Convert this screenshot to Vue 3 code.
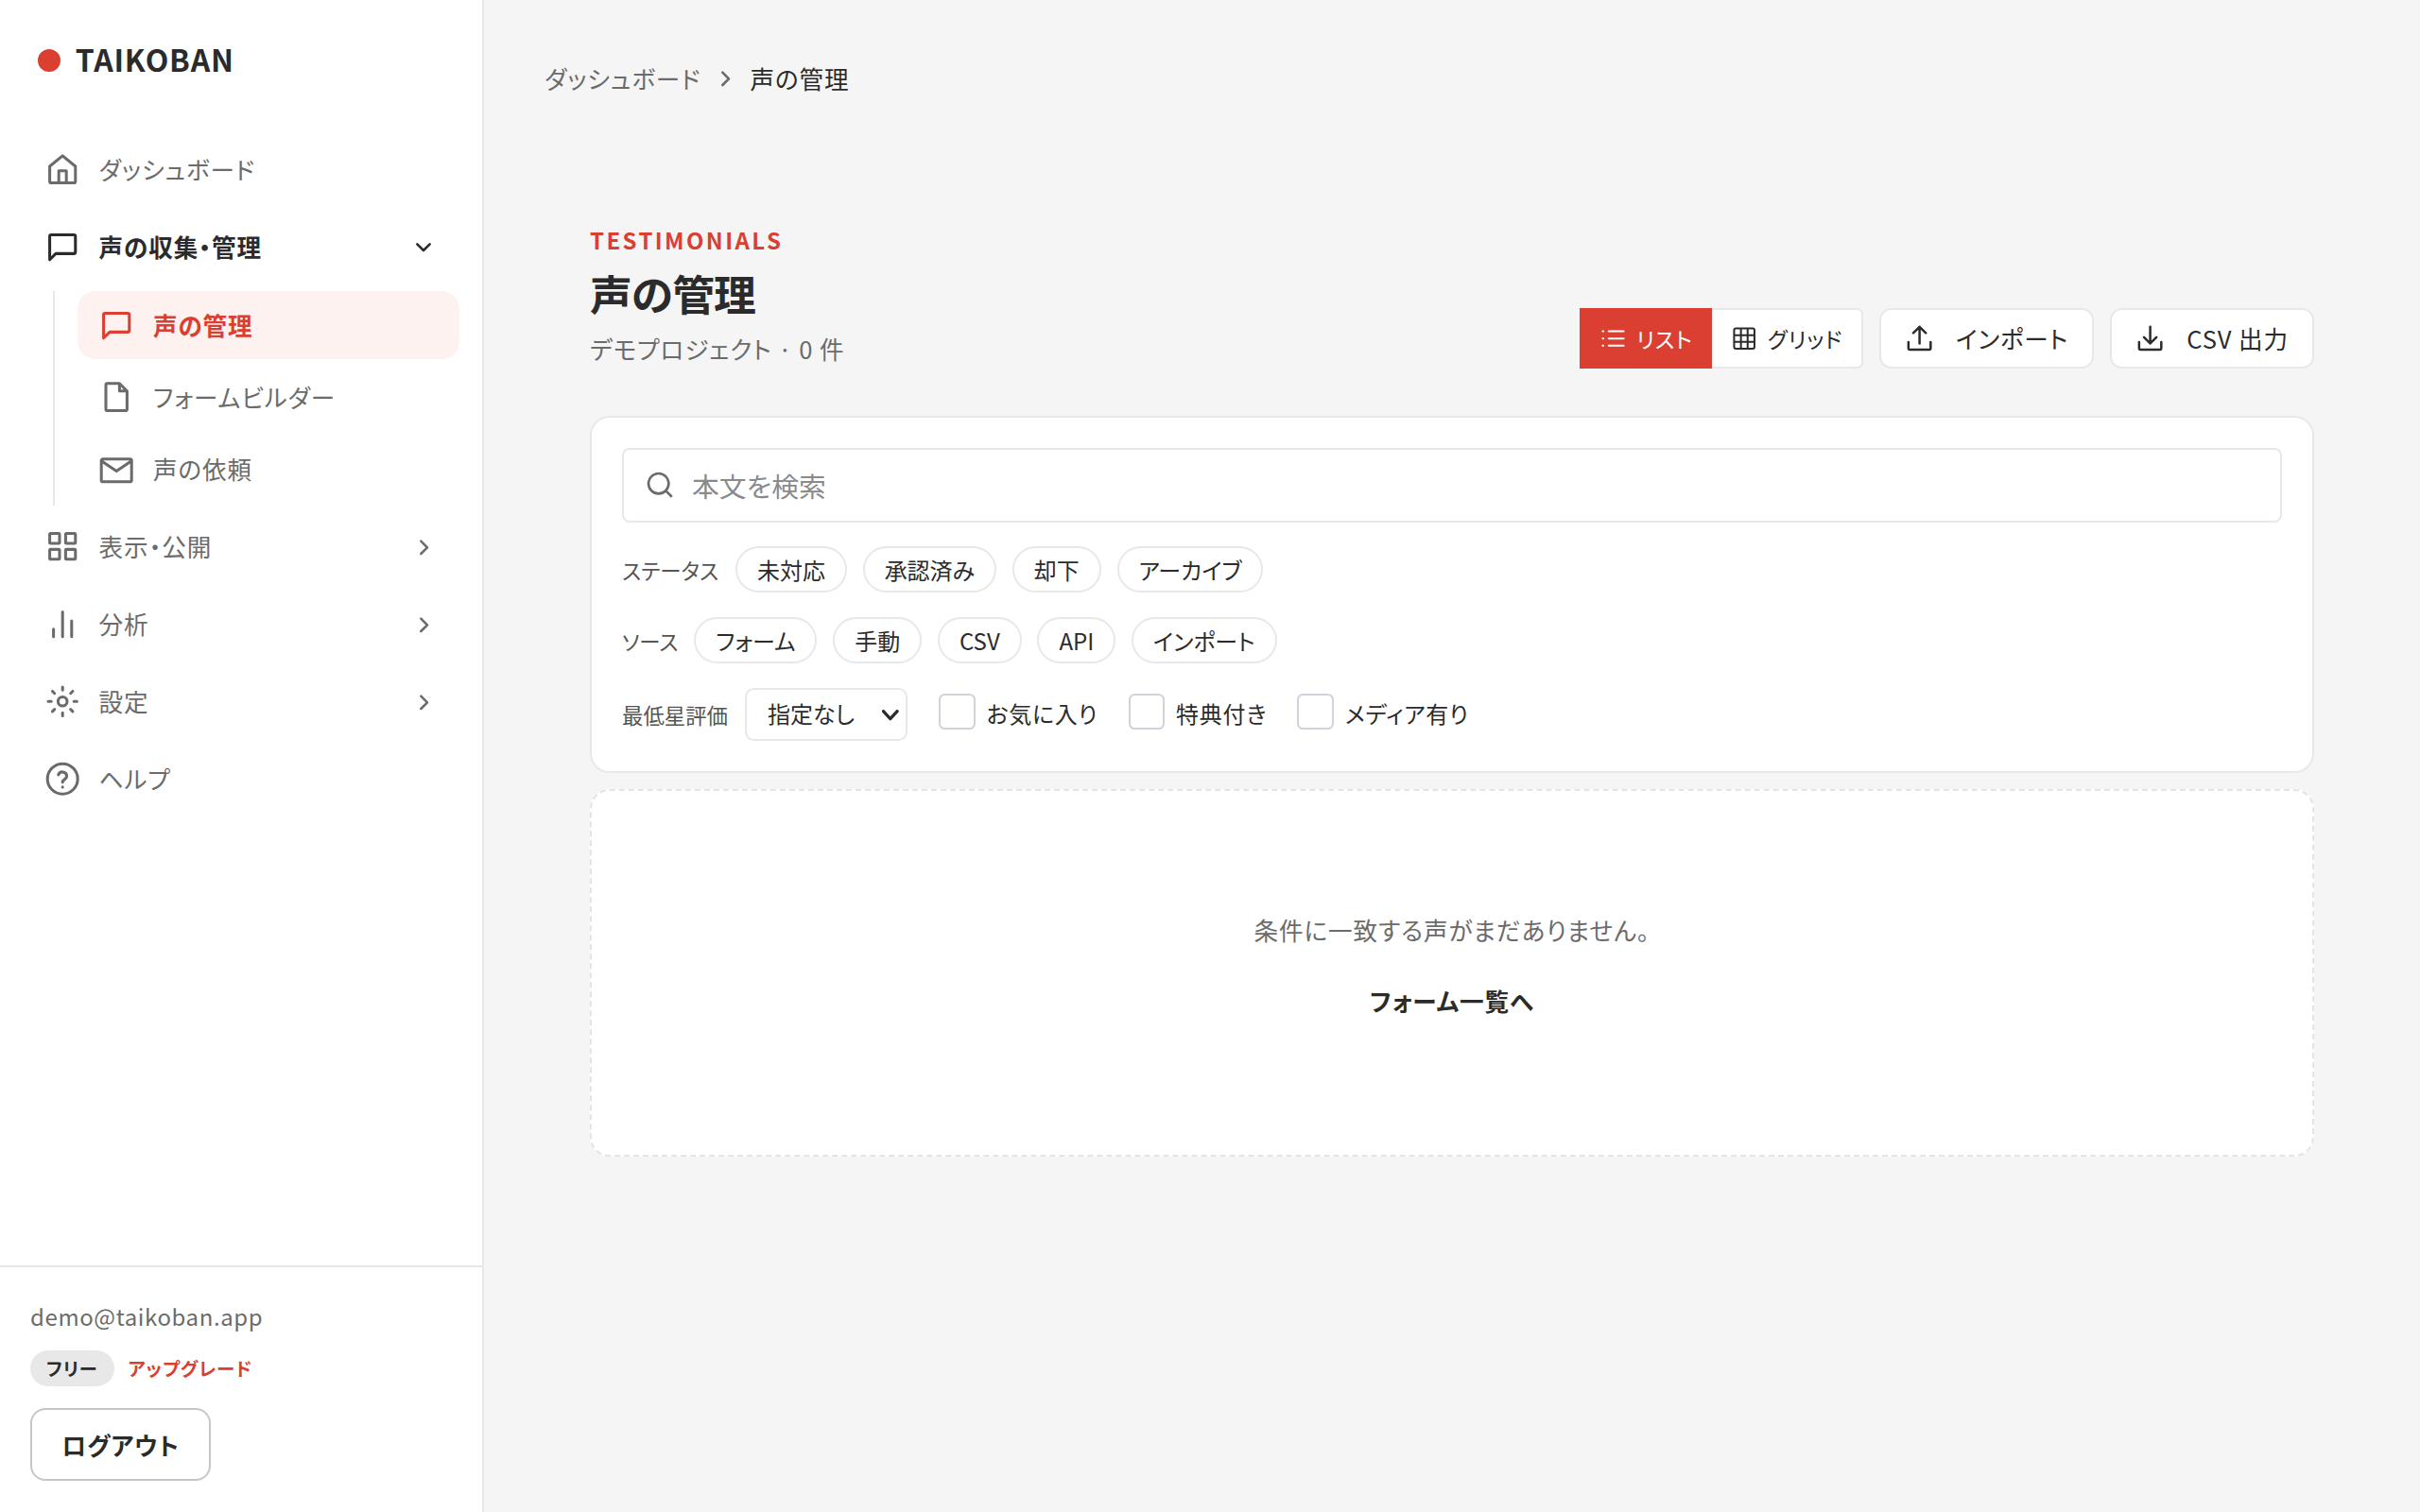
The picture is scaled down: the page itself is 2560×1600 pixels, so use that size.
<script setup>
const icons = {
  home: 'M3.5 10 12 3l8.5 7v10a1 1 0 0 1-1 1h-15a1 1 0 0 1-1-1V10ZM9.5 21v-8h5v8',
  chat: 'M3.5 20.5V5a1 1 0 0 1 1-1h15a1 1 0 0 1 1 1v10.5a1 1 0 0 1-1 1H7.5l-4 4Z',
  file: 'M6 3h8l5 5v12a1 1 0 0 1-1 1H6a1 1 0 0 1-1-1V4a1 1 0 0 1 1-1ZM14 3v5h5',
  mail: 'M3 5.5h18a1 1 0 0 1 1 1v13a1 1 0 0 1-1 1H3a1 1 0 0 1-1-1v-13a1 1 0 0 1 1-1ZM2.5 7 12 13.5 21.5 7',
  grid: 'M4 3.5h5.5a.5.5 0 0 1 .5.5v5.5a.5.5 0 0 1-.5.5H4a.5.5 0 0 1-.5-.5V4a.5.5 0 0 1 .5-.5ZM14.5 3.5H20a.5.5 0 0 1 .5.5v5.5a.5.5 0 0 1-.5.5h-5.5a.5.5 0 0 1-.5-.5V4a.5.5 0 0 1 .5-.5ZM4 14h5.5a.5.5 0 0 1 .5.5V20a.5.5 0 0 1-.5.5H4a.5.5 0 0 1-.5-.5v-5.5A.5.5 0 0 1 4 14ZM14.5 14H20a.5.5 0 0 1 .5.5V20a.5.5 0 0 1-.5.5h-5.5a.5.5 0 0 1-.5-.5v-5.5a.5.5 0 0 1 .5-.5Z',
  bars: 'M6 20.5v-5M12 20.5V4M18 20.5V10',
  sun: 'M12 15a3 3 0 1 0 0-6 3 3 0 0 0 0 6ZM12 2.5v2M12 19.5v2M5.3 5.3l1.4 1.4M17.3 17.3l1.4 1.4M2.5 12h2M19.5 12h2M5.3 18.7l1.4-1.4M17.3 6.7l1.4-1.4',
  help: 'M12 22a10 10 0 1 0 0-20 10 10 0 0 0 0 20ZM9.2 9.3a2.9 2.9 0 0 1 5.6.9c0 1.9-2.8 2.4-2.8 4M12 17.4v.1',
  down: 'm7 10 5 5 5-5',
  right: 'm10 8 5 5-5 5',
  list: 'M8.5 6H21M8.5 12H21M8.5 18H21M3.5 6h.5M3.5 12h.5M3.5 18h.5',
  table: 'M5 3.5h14a1.5 1.5 0 0 1 1.5 1.5v14a1.5 1.5 0 0 1-1.5 1.5H5A1.5 1.5 0 0 1 3.5 19V5A1.5 1.5 0 0 1 5 3.5ZM3.5 9.2h17M3.5 14.8h17M9.2 3.5v17M14.8 3.5v17',
  upload: 'M4 15v4.5a1 1 0 0 0 1 1h14a1 1 0 0 0 1-1V15M12 16V4M7.5 8.5 12 4l4.5 4.5',
  download: 'M4 15v4.5a1 1 0 0 0 1 1h14a1 1 0 0 0 1-1V15M12 4v12M7.5 11.5 12 16l4.5-4.5',
  search: 'M11 19a8 8 0 1 0 0-16 8 8 0 0 0 0 16ZM16.8 16.8 21 21',
}

const subItems = [
  { label: '声の管理', icon: 'chat', active: true },
  { label: 'フォームビルダー', icon: 'file' },
  { label: '声の依頼', icon: 'mail' },
]
const lowerItems = [
  { label: '表示・公開', icon: 'grid', arrow: true },
  { label: '分析', icon: 'bars', arrow: true },
  { label: '設定', icon: 'sun', arrow: true },
  { label: 'ヘルプ', icon: 'help' },
]
const statuses = ['未対応', '承認済み', '却下', 'アーカイブ']
const sources = ['フォーム', '手動', 'CSV', 'API', 'インポート']
const toggles = ['お気に入り', '特典付き', 'メディア有り']
</script>

<template>
  <div class="app">
    <aside class="sidebar">
      <div class="logo">
        <span class="logo-dot"></span>
        <span class="logo-text">TAIKOBAN</span>
      </div>

      <nav class="nav">
        <a class="nav-item">
          <svg class="icon" viewBox="0 0 24 24"><path :d="icons.home" /></svg>
          <span>ダッシュボード</span>
        </a>
        <a class="nav-item open">
          <svg class="icon" viewBox="0 0 24 24"><path :d="icons.chat" /></svg>
          <span>声の収集・管理</span>
          <svg class="arrow" viewBox="0 0 24 24"><path :d="icons.down" /></svg>
        </a>
        <div class="sub-list">
          <a
            v-for="item in subItems"
            :key="item.label"
            class="sub-item"
            :class="{ active: item.active }"
          >
            <svg class="icon" viewBox="0 0 24 24"><path :d="icons[item.icon]" /></svg>
            <span>{{ item.label }}</span>
          </a>
        </div>
        <a v-for="item in lowerItems" :key="item.label" class="nav-item">
          <svg class="icon" viewBox="0 0 24 24"><path :d="icons[item.icon]" /></svg>
          <span>{{ item.label }}</span>
          <svg v-if="item.arrow" class="arrow" viewBox="0 0 24 24"><path :d="icons.right" /></svg>
        </a>
      </nav>

      <div class="account">
        <div class="email">demo@taikoban.app</div>
        <div class="plan-row">
          <span class="plan">フリー</span>
          <a class="upgrade">アップグレード</a>
        </div>
        <button class="logout">ログアウト</button>
      </div>
    </aside>

    <main class="main">
      <div class="breadcrumb">
        <span>ダッシュボード</span>
        <svg class="crumb-arrow" viewBox="0 0 24 24"><path :d="icons.right" /></svg>
        <span class="current">声の管理</span>
      </div>

      <div class="content">
        <header class="page-head">
          <div>
            <div class="eyebrow">TESTIMONIALS</div>
            <h1 class="title">声の管理</h1>
            <p class="subtitle">デモプロジェクト · 0 件</p>
          </div>
          <div class="actions">
            <div class="view-toggle">
              <button class="view-btn on">
                <svg class="view-icon" viewBox="0 0 24 24"><path :d="icons.list" /></svg>
                リスト
              </button>
              <button class="view-btn">
                <svg class="view-icon" viewBox="0 0 24 24"><path :d="icons.table" /></svg>
                グリッド
              </button>
            </div>
            <button class="action-btn">
              <svg class="action-icon" viewBox="0 0 24 24"><path :d="icons.upload" /></svg>
              インポート
            </button>
            <button class="action-btn">
              <svg class="action-icon" viewBox="0 0 24 24"><path :d="icons.download" /></svg>
              CSV 出力
            </button>
          </div>
        </header>

        <section class="filters">
          <div class="search">
            <svg class="search-icon" viewBox="0 0 24 24"><path :d="icons.search" /></svg>
            <input class="search-input" type="text" placeholder="本文を検索" />
          </div>
          <div class="filter-row first">
            <span class="filter-label">ステータス</span>
            <button v-for="s in statuses" :key="s" class="pill">{{ s }}</button>
          </div>
          <div class="filter-row">
            <span class="filter-label">ソース</span>
            <button v-for="s in sources" :key="s" class="pill">{{ s }}</button>
          </div>
          <div class="filter-row last">
            <span class="filter-label">最低星評価</span>
            <div class="rating-wrap">
              <select class="rating">
                <option>指定なし</option>
              </select>
              <svg class="rating-arrow" viewBox="0 0 12 8"><path d="m1 1 5 5.5L11 1" /></svg>
            </div>
            <label v-for="t in toggles" :key="t" class="check">
              <input type="checkbox" />
              <span>{{ t }}</span>
            </label>
          </div>
        </section>

        <section class="empty">
          <p class="empty-text">条件に一致する声がまだありません。</p>
          <a class="empty-link">フォーム一覧へ</a>
        </section>
      </div>
    </main>
  </div>
</template>

<style>
html,
body {
  margin: 0;
  background: #f5f5f5;
}
</style>

<style scoped>
.app {
  zoom: 1.6;
  display: flex;
  width: 1600px;
  height: 1000px;
  background: #f5f5f5;
  color: #2b2b2b;
  font-family: "Noto Sans CJK JP", "Noto Sans", sans-serif;
  font-feature-settings: "palt";
  letter-spacing: 0.035em;
  overflow: hidden;
}

svg {
  fill: none;
  stroke: currentColor;
  stroke-linecap: round;
  stroke-linejoin: round;
  flex-shrink: 0;
}

button,
input,
select {
  font-family: inherit;
  font-feature-settings: inherit;
  color: inherit;
}

.sidebar {
  display: flex;
  flex-direction: column;
  box-sizing: border-box;
  width: 320px;
  height: 1000px;
  background: #fff;
  border-right: 1.25px solid #e8e8e8;
}

.logo {
  display: flex;
  align-items: center;
  gap: 9.9px;
  height: 40px;
  padding: 20px 0 0 25px;
}

.logo-dot {
  width: 15px;
  height: 15px;
  border-radius: 50%;
  background: #db3f31;
}

.logo-text {
  margin-bottom: 2px;
  font-size: 20px;
  font-weight: 600;
  letter-spacing: 0.025em;
}

.nav {
  display: flex;
  flex-direction: column;
  gap: 6.4px;
  padding: 29.6px 15px 0 16px;
}

.nav-item,
.sub-item {
  display: flex;
  align-items: center;
  gap: 12px;
  box-sizing: border-box;
  height: 44.8px;
  padding: 0 14px 0 13.4px;
  color: #6b6b6b;
  font-size: 16px;
}

.nav-item span,
.sub-item span {
  margin-bottom: 1px;
}

.nav-item.open {
  color: #2b2b2b;
  font-weight: 600;
}

.icon {
  width: 24px;
  height: 24px;
  stroke-width: 1.9;
}

.arrow {
  width: 20px;
  height: 20px;
  margin-left: auto;
  stroke-width: 1.9;
}

.sub-list {
  display: flex;
  flex-direction: column;
  gap: 2.9px;
  margin: 0.6px 0 -1.5px 19px;
  padding: 0 0 1.5px 15px;
  border-left: 1.25px solid #e8e8e8;
}

.sub-item {
  padding-left: 14px;
  border-radius: 12px;
}

.sub-item.active {
  background: #fdf2f0;
  color: #db3f31;
  font-weight: 600;
}

.account {
  box-sizing: border-box;
  height: 163px;
  margin-top: auto;
  padding: 20.6px 0 0 20px;
  border-top: 1.25px solid #e8e8e8;
}

.email {
  color: #6b6b6b;
  font-size: 15px;
  letter-spacing: 0.025em;
  line-height: 24px;
}

.plan-row {
  display: flex;
  align-items: center;
  gap: 9.4px;
  margin-top: 10px;
}

.plan {
  display: inline-block;
  padding: 0 10.6px;
  border-radius: 12px;
  background: #e8e8e8;
  font-size: 12px;
  font-weight: 600;
  line-height: 24px;
}

.upgrade {
  color: #db3f31;
  font-size: 12.2px;
  font-weight: 600;
}

.logout {
  display: block;
  box-sizing: border-box;
  width: 119.5px;
  height: 48px;
  margin-top: 14.5px;
  padding: 0;
  border: 1.25px solid #c6c6c6;
  border-radius: 10px;
  background: #fff;
  font-size: 16px;
  font-weight: 600;
  letter-spacing: 0.035em;
}

.main {
  flex: 1;
  min-width: 0;
  padding: 19.4px 40px 0;
}

.breadcrumb {
  display: flex;
  align-items: center;
  height: 24px;
  margin-top: 20px;
  color: #6b6b6b;
  font-size: 16px;
}

.crumb-arrow {
  width: 20px;
  height: 20px;
  margin: 0 6.3px;
  stroke-width: 2;
}

.current {
  color: #2b2b2b;
}

.content {
  padding: 0 30px;
}

.page-head {
  display: flex;
  justify-content: space-between;
  align-items: flex-end;
  margin-top: 85.5px;
  margin-bottom: 32.2px;
}

.eyebrow {
  color: #db3f31;
  font-size: 15px;
  font-weight: 600;
  letter-spacing: 0.1em;
  line-height: 20px;
}

.title {
  margin: 5px 0 0;
  font-size: 28px;
  font-weight: 700;
  letter-spacing: -0.02em;
  line-height: 40px;
}

.subtitle {
  margin: 4.9px 0 0;
  color: #6b6b6b;
  font-size: 16px;
  line-height: 24px;
}

.actions {
  display: flex;
  align-items: center;
  gap: 10.6px;
  margin-bottom: -1px;
}

.view-toggle {
  display: flex;
  box-sizing: border-box;
  height: 40px;
  background: #fff;
  border: 1.25px solid #e8e8ec;
  border-left: 0;
  border-radius: 0 4px 4px 0;
}

.view-btn {
  display: flex;
  align-items: center;
  justify-content: center;
  gap: 6px;
  margin: -1.25px 0;
  padding: 0;
  width: 87px;
  border: 0;
  background: transparent;
  font-size: 14.4px;
  letter-spacing: 0.035em;
}

.view-btn + .view-btn {
  width: 99px;
}

.view-btn.on {
  background: #db3f31;
  color: #fff;
}

.view-icon {
  width: 19px;
  height: 19px;
  stroke-width: 1.6;
}

.action-btn {
  display: flex;
  align-items: center;
  gap: 13px;
  box-sizing: border-box;
  height: 40px;
  padding: 0 15.6px 1.2px 14.4px;
  border: 1.25px solid #e8e8ec;
  border-radius: 8px;
  background: #fff;
  font-size: 16px;
  letter-spacing: 0.035em;
}

.action-icon {
  width: 22px;
  height: 22px;
  stroke-width: 1.7;
}

.filters {
  box-sizing: border-box;
  height: 236px;
  padding: 20px;
  background: #fff;
  border: 1.25px solid #e8e8ec;
  border-radius: 13px;
}

.search {
  display: flex;
  align-items: center;
  box-sizing: border-box;
  height: 49.4px;
  padding: 0 15px 0 14px;
  gap: 11px;
  border: 1.25px solid #e8e8ec;
  border-radius: 5px;
}

.search-icon {
  width: 20px;
  height: 20px;
  color: #6b6b6b;
  stroke-width: 2;
}

.search-input {
  flex: 1;
  border: 0;
  outline: 0;
  padding: 0;
  background: transparent;
  font-size: 18px;
}

.search-input::placeholder {
  color: #8a8a8a;
}

.filter-row {
  display: flex;
  align-items: center;
  gap: 10.5px;
  height: 31px;
  margin-top: 16px;
  letter-spacing: 0;
}

.filter-row.first {
  margin-top: 15.5px;
}

.filter-row.first .filter-label {
  margin-right: 0.6px;
}

.filter-row.last {
  gap: 20px;
  height: 35px;
  margin-top: 16px;
}

.filter-row.last .filter-label {
  margin-right: -8.5px;
}

.filter-label {
  color: #555;
  font-size: 14px;
}

.pill {
  box-sizing: border-box;
  height: 30.6px;
  padding: 0 13.1px;
  border: 1.25px solid #e8e8ec;
  border-radius: 16px;
  background: #fff;
  font-size: 15px;
}

.rating-wrap {
  position: relative;
  margin-right: 1px;
}

.rating {
  display: block;
  appearance: none;
  box-sizing: border-box;
  width: 107px;
  height: 35px;
  padding: 0 0 1.5px 13.5px;
  border: 1.25px solid #e8e8ec;
  border-radius: 6px;
  background: #fff;
  font-size: 15px;
}

.rating-arrow {
  position: absolute;
  top: 14px;
  right: 5.5px;
  width: 11px;
  height: 7.5px;
  stroke-width: 2.2;
  pointer-events: none;
}

.check {
  display: flex;
  align-items: center;
  gap: 7.5px;
  margin-right: 0.3px;
  font-size: 15px;
  letter-spacing: 0.03em;
}

.check span {
  margin-bottom: 2px;
}

.check input {
  appearance: none;
  box-sizing: border-box;
  width: 24px;
  height: 24px;
  margin: 0 0 4px;
  border: 1.25px solid #d2d2da;
  border-radius: 4px;
  background: #fff;
}

.empty {
  display: flex;
  flex-direction: column;
  align-items: center;
  box-sizing: border-box;
  height: 243px;
  margin-top: 11px;
  padding-top: 80px;
  background: #fff;
  border: 1.25px dashed #e4e4e4;
  border-radius: 13px;
}

.empty-text {
  margin: 0;
  color: #6b6b6b;
  font-size: 16px;
  line-height: 24px;
}

.empty-link {
  margin-top: 22.5px;
  font-size: 16px;
  font-weight: 600;
  line-height: 24px;
}
</style>
